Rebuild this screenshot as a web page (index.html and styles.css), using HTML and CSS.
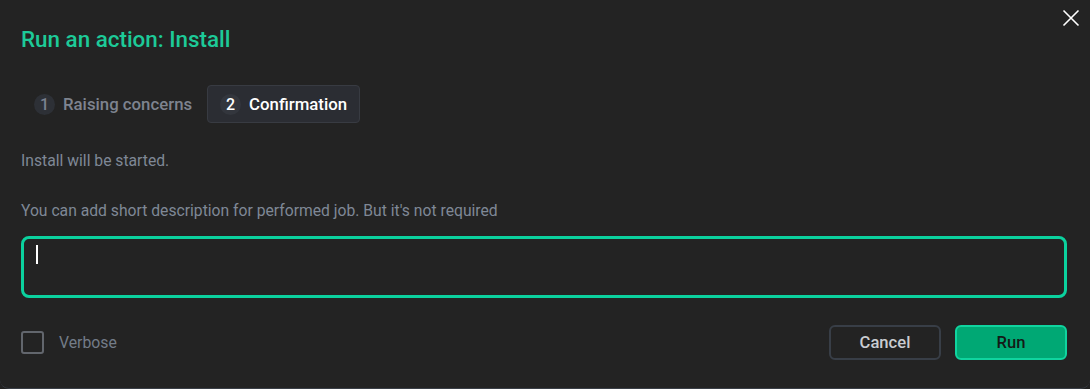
FILE: index.html
```html
<!DOCTYPE html>
<html>
<head>
<meta charset="utf-8">
<link rel="stylesheet" href="styles.css">
</head>
<body>
<div class="modal">
  <button class="close" aria-label="Close">
    <svg width="18" height="18" viewBox="0 0 18 18"><path d="M1.5 1.5L16.5 16.5M16.5 1.5L1.5 16.5" stroke="#ffffff" stroke-width="1.6" fill="none"/></svg>
  </button>
  <h1 class="title">Run an action: Install</h1>
  <div class="tabs">
    <div class="tab">
      <span class="num">1</span><span class="label">Raising concerns</span>
    </div>
    <div class="tab active">
      <span class="num">2</span><span class="label">Confirmation</span>
    </div>
  </div>
  <p class="text first">Install will be started.</p>
  <p class="text second">You can add short description for performed job. But it's not required</p>
  <div class="input"><span class="caret"></span></div>
  <div class="footer">
    <label class="check"><span class="box"></span><span class="check-label">Verbose</span></label>
    <div class="buttons">
      <button class="btn cancel">Cancel</button>
      <button class="btn run">Run</button>
    </div>
  </div>
</div>
</body>
</html>
```

FILE: styles.css
```css
html, body {
  margin: 0;
  padding: 0;
  background: #222222;
}
body {
  font-family: Roboto, "Liberation Sans", sans-serif;
  width: 1090px;
  height: 389px;
  overflow: hidden;
}
.modal {
  position: relative;
  box-sizing: border-box;
  height: 389px;
  background: #232323;
  border-bottom: 1px solid #3a3f47;
  border-radius: 0 0 9px 9px;
  padding: 0 23px 0 21px;
}
.close {
  position: absolute;
  top: 9px;
  right: 10px;
  width: 18px;
  height: 18px;
  padding: 0;
  border: 0;
  background: none;
  display: flex;
}
.title {
  margin: 0;
  padding-top: 26px;
  font-size: 22.4px;
  line-height: 26px;
  font-weight: 500;
  color: #1dca98;
}
.tabs {
  display: flex;
  gap: 2px;
  margin-top: 33px;
}
.tab {
  display: flex;
  align-items: center;
  height: 38px;
  box-sizing: border-box;
  border: 1px solid transparent;
  border-radius: 4px;
  padding: 0 12px;
  gap: 8px;
}
.tab.active {
  background: #2b2d33;
  border-color: #383b42;
}
.num {
  width: 21px;
  height: 21px;
  border-radius: 50%;
  background: #2d3036;
  color: #7b8190;
  font-size: 16px;
  font-weight: 500;
  display: flex;
  align-items: center;
  justify-content: center;
}
.label {
  font-size: 16.8px;
  font-weight: 500;
  color: #7e838f;
}
.active .num { color: #ffffff; background: #33363d; }
.active .label { color: #ffffff; }
.text {
  margin: 0;
  font-size: 15.7px;
  line-height: 20px;
  color: #7f8896;
}
.first { margin-top: 28px; }
.second { margin-top: 30px; }
.input {
  margin-top: 15px;
  height: 62px;
  box-sizing: border-box;
  border: 3px solid #0bd19e;
  border-radius: 8px;
  padding: 6px 0 0 12px;
}
.caret {
  display: block;
  width: 2px;
  height: 19px;
  background: #ffffff;
}
.footer {
  display: flex;
  justify-content: space-between;
  align-items: center;
  margin-top: 27px;
}
.check {
  display: flex;
  align-items: center;
  gap: 15px;
}
.box {
  width: 23px;
  height: 23px;
  box-sizing: border-box;
  border: 2px solid #62666d;
  border-radius: 3px;
}
.check-label {
  font-size: 15.8px;
  color: #737c88;
}
.buttons {
  display: flex;
  gap: 14px;
}
.btn {
  width: 112px;
  height: 35px;
  box-sizing: border-box;
  border-radius: 6px;
  font-family: Roboto, "Liberation Sans", sans-serif;
  font-size: 16.6px;
  font-weight: 500;
  padding: 0;
}
.cancel {
  background: transparent;
  border: 2px solid #383e47;
  color: #c9ccd1;
}
.run {
  background: #00a874;
  border: 2px solid #10d49f;
  color: #141a17;
}
```
